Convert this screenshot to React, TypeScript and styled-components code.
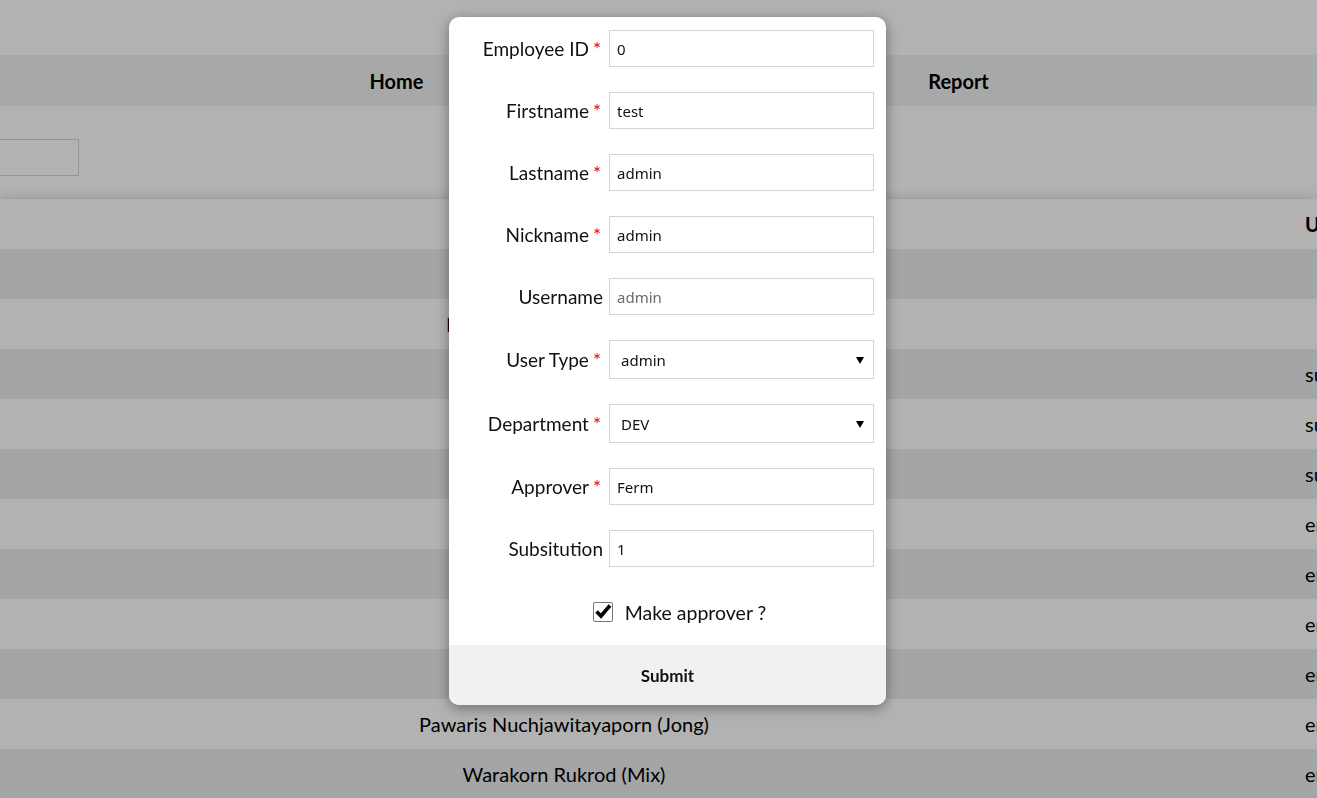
import React from 'react';
import styled, { createGlobalStyle } from 'styled-components';

const GlobalStyle = createGlobalStyle`
  * { box-sizing: border-box; }
  html, body { margin: 0; padding: 0; }
  body {
    width: 1317px;
    height: 798px;
    overflow: hidden;
    background: #fff;
    font-family: Lato, "Noto Sans", sans-serif;
    color: #000;
  }
`;

interface Employee {
	name: string;
	type: string;
}

const employees: Employee[] = [
	{ name: 'Somchai Jaidee (Chai)', type: '' },
	{ name: 'Kittisak Wongsawatna (Kit)', type: '' },
	{ name: 'Nattapong Srisuk (Nat)', type: 'superadmin' },
	{ name: 'Pimchanok Rattana (Pim)', type: 'superadmin' },
	{ name: 'Thanawat Boonmee (Tan)', type: 'superadmin' },
	{ name: 'Siriporn Chaiyo (Fon)', type: 'employee' },
	{ name: 'Anucha Kaewkla (Nu)', type: 'employee' },
	{ name: 'Chanida Meesuk (Mint)', type: 'employee' },
	{ name: 'Worawit Thongdee (Win)', type: 'employee' },
	{ name: 'Pawaris Nuchjawitayaporn (Jong)', type: 'employee' },
	{ name: 'Warakorn Rukrod (Mix)', type: 'employee' },
];

const App = () => {
	return (
		<>
			<GlobalStyle />
			<Page>
				<TopBar />
				<NavBar>
					<NavItem>Home</NavItem>
					<NavItem>Employee</NavItem>
					<NavItem>Report</NavItem>
				</NavBar>
				<Toolbar>
					<SearchInput />
				</Toolbar>
				<Table>
					<Row header>
						<NameCell>Name</NameCell>
						<Cell />
						<TypeCell>Usertype</TypeCell>
					</Row>
					{employees.map((emp, index) => (
						<Row key={index.toString()} dark={index % 2 === 0}>
							<NameCell>{emp.name}</NameCell>
							<Cell />
							<TypeCell>{emp.type}</TypeCell>
						</Row>
					))}
				</Table>
			</Page>

			<Overlay>
				<Modal>
					<Form>
						<Field>
							<Label>
								Employee ID<Req>*</Req>
							</Label>
							<TextInput defaultValue="0" />
						</Field>
						<Field>
							<Label>
								Firstname<Req>*</Req>
							</Label>
							<TextInput defaultValue="test" />
						</Field>
						<Field>
							<Label>
								Lastname<Req>*</Req>
							</Label>
							<TextInput defaultValue="admin" />
						</Field>
						<Field>
							<Label>
								Nickname<Req>*</Req>
							</Label>
							<TextInput defaultValue="admin" />
						</Field>
						<Field>
							<Label>Username</Label>
							<TextInput defaultValue="admin" readOnly muted />
						</Field>
						<Field>
							<Label>
								User Type<Req>*</Req>
							</Label>
							<SelectWrap>
								<Select defaultValue="admin">
									<option value="admin">admin</option>
									<option value="employee">employee</option>
								</Select>
							</SelectWrap>
						</Field>
						<Field>
							<Label>
								Department<Req>*</Req>
							</Label>
							<SelectWrap>
								<Select defaultValue="DEV">
									<option value="DEV">DEV</option>
									<option value="HR">HR</option>
								</Select>
							</SelectWrap>
						</Field>
						<Field>
							<Label>
								Approver<Req>*</Req>
							</Label>
							<TextInput defaultValue="Ferm" />
						</Field>
						<Field>
							<Label>Subsitution</Label>
							<TextInput defaultValue="1" />
						</Field>
						<CheckRow>
							<CheckBox>
								<svg width="20" height="20" viewBox="0 0 20 20">
									<path
										d="M3.5 9.5 L8 14 L17 3.5"
										fill="none"
										stroke="#000"
										strokeWidth="3.6"
										strokeLinejoin="miter"
									/>
								</svg>
							</CheckBox>
							<CheckLabel>Make approver ?</CheckLabel>
						</CheckRow>
					</Form>
					<SubmitButton>Submit</SubmitButton>
				</Modal>
			</Overlay>
		</>
	);
};

export default App;

const Page = styled.div({
	width: '1317px',
	height: '798px',
	overflow: 'hidden',
});

const TopBar = styled.div({
	height: '55px',
});

const NavBar = styled.nav({
	display: 'flex',
	height: '51px',
	paddingLeft: '256px',
	backgroundColor: '#f0f3f1',
});

const NavItem = styled.div({
	width: '281px',
	lineHeight: '52px',
	textAlign: 'center',
	fontSize: '20px',
	fontWeight: 700,
});

const Toolbar = styled.div({
	height: '93px',
	paddingTop: '33px',
});

const SearchInput = styled.input({
	display: 'block',
	width: '119px',
	height: '37px',
	marginLeft: '-40px',
	border: '1px solid #d6d6d6',
});

const Table = styled.div({
	width: '1317px',
	overflow: 'hidden',
	boxShadow: '0 -2px 10px rgba(0, 0, 0, 0.14)',
	backgroundColor: '#fff',
});

const Row = styled.div<{ dark?: boolean; header?: boolean }>(({ dark, header }) => ({
	display: 'grid',
	gridTemplateColumns: '1128px 167px 220px',
	alignItems: 'center',
	height: '50px',
	fontSize: '20px',
	fontWeight: header ? 700 : 400,
	backgroundColor: dark ? '#eaecef' : '#fff',
}));

const Cell = styled.div({
	whiteSpace: 'nowrap',
});

const NameCell = styled(Cell)({
	textAlign: 'center',
});

const TypeCell = styled(Cell)({
	paddingLeft: '10px',
});

const Overlay = styled.div({
	position: 'fixed',
	inset: 0,
	display: 'flex',
	justifyContent: 'center',
	alignItems: 'flex-start',
	paddingTop: '17px',
	paddingLeft: '18px',
	backgroundColor: 'rgba(0, 0, 0, 0.3)',
});

const Modal = styled.div({
	width: '437px',
	backgroundColor: '#fff',
	borderRadius: '10px',
	overflow: 'hidden',
	boxShadow: '0 3px 14px rgba(0, 0, 0, 0.4)',
});

const Form = styled.div({
	padding: '13px 12px 13px',
});

const Field = styled.div({
	display: 'grid',
	gridTemplateColumns: '1fr 265px',
	columnGap: '6px',
	alignItems: 'center',
	marginBottom: '25px',
});

const Label = styled.label({
	textAlign: 'right',
	whiteSpace: 'nowrap',
	fontSize: '19px',
	color: '#111',
});

const Req = styled.span({
	color: '#e60000',
	marginLeft: '4px',
	marginRight: '2px',
});

const TextInput = styled.input<{ muted?: boolean }>(({ muted }) => ({
	height: '37px',
	width: '100%',
	padding: '0 7px',
	border: '1px solid #d4d4d4',
	borderRadius: 0,
	outline: 'none',
	fontFamily: '"Noto Sans", sans-serif',
	fontSize: '15px',
	color: muted ? '#6b6b6b' : '#111',
	backgroundColor: '#fff',
}));

const SelectWrap = styled.div({
	position: 'relative',
	'&:after': {
		content: '""',
		position: 'absolute',
		right: '10px',
		top: '17px',
		borderLeft: '4px solid transparent',
		borderRight: '4px solid transparent',
		borderTop: '7px solid #000',
		pointerEvents: 'none',
	},
});

const Select = styled.select({
	display: 'block',
	width: '100%',
	height: '39px',
	padding: '0 30px 0 11px',
	border: '1px solid #d4d4d4',
	borderRadius: 0,
	appearance: 'none',
	outline: 'none',
	backgroundColor: '#fff',
	fontFamily: '"Noto Sans", sans-serif',
	fontSize: '15px',
	color: '#111',
});

const CheckRow = styled.div({
	display: 'flex',
	alignItems: 'center',
	justifyContent: 'center',
	gap: '12px',
	height: '40px',
	paddingLeft: '24px',
});

const CheckBox = styled.span({
	display: 'inline-flex',
	width: '20px',
	height: '20px',
	border: '1px solid #767676',
	borderRadius: '2px',
	backgroundColor: '#fff',
	overflow: 'visible',
	svg: {
		margin: '-1px',
	},
});

const CheckLabel = styled.span({
	fontSize: '19.5px',
	color: '#111',
});

const SubmitButton = styled.button({
	display: 'block',
	width: '100%',
	height: '60px',
	border: 'none',
	backgroundColor: '#f0f1f3',
	fontFamily: 'Lato, "Noto Sans", sans-serif',
	fontSize: '17px',
	fontWeight: 700,
	color: '#111',
});
